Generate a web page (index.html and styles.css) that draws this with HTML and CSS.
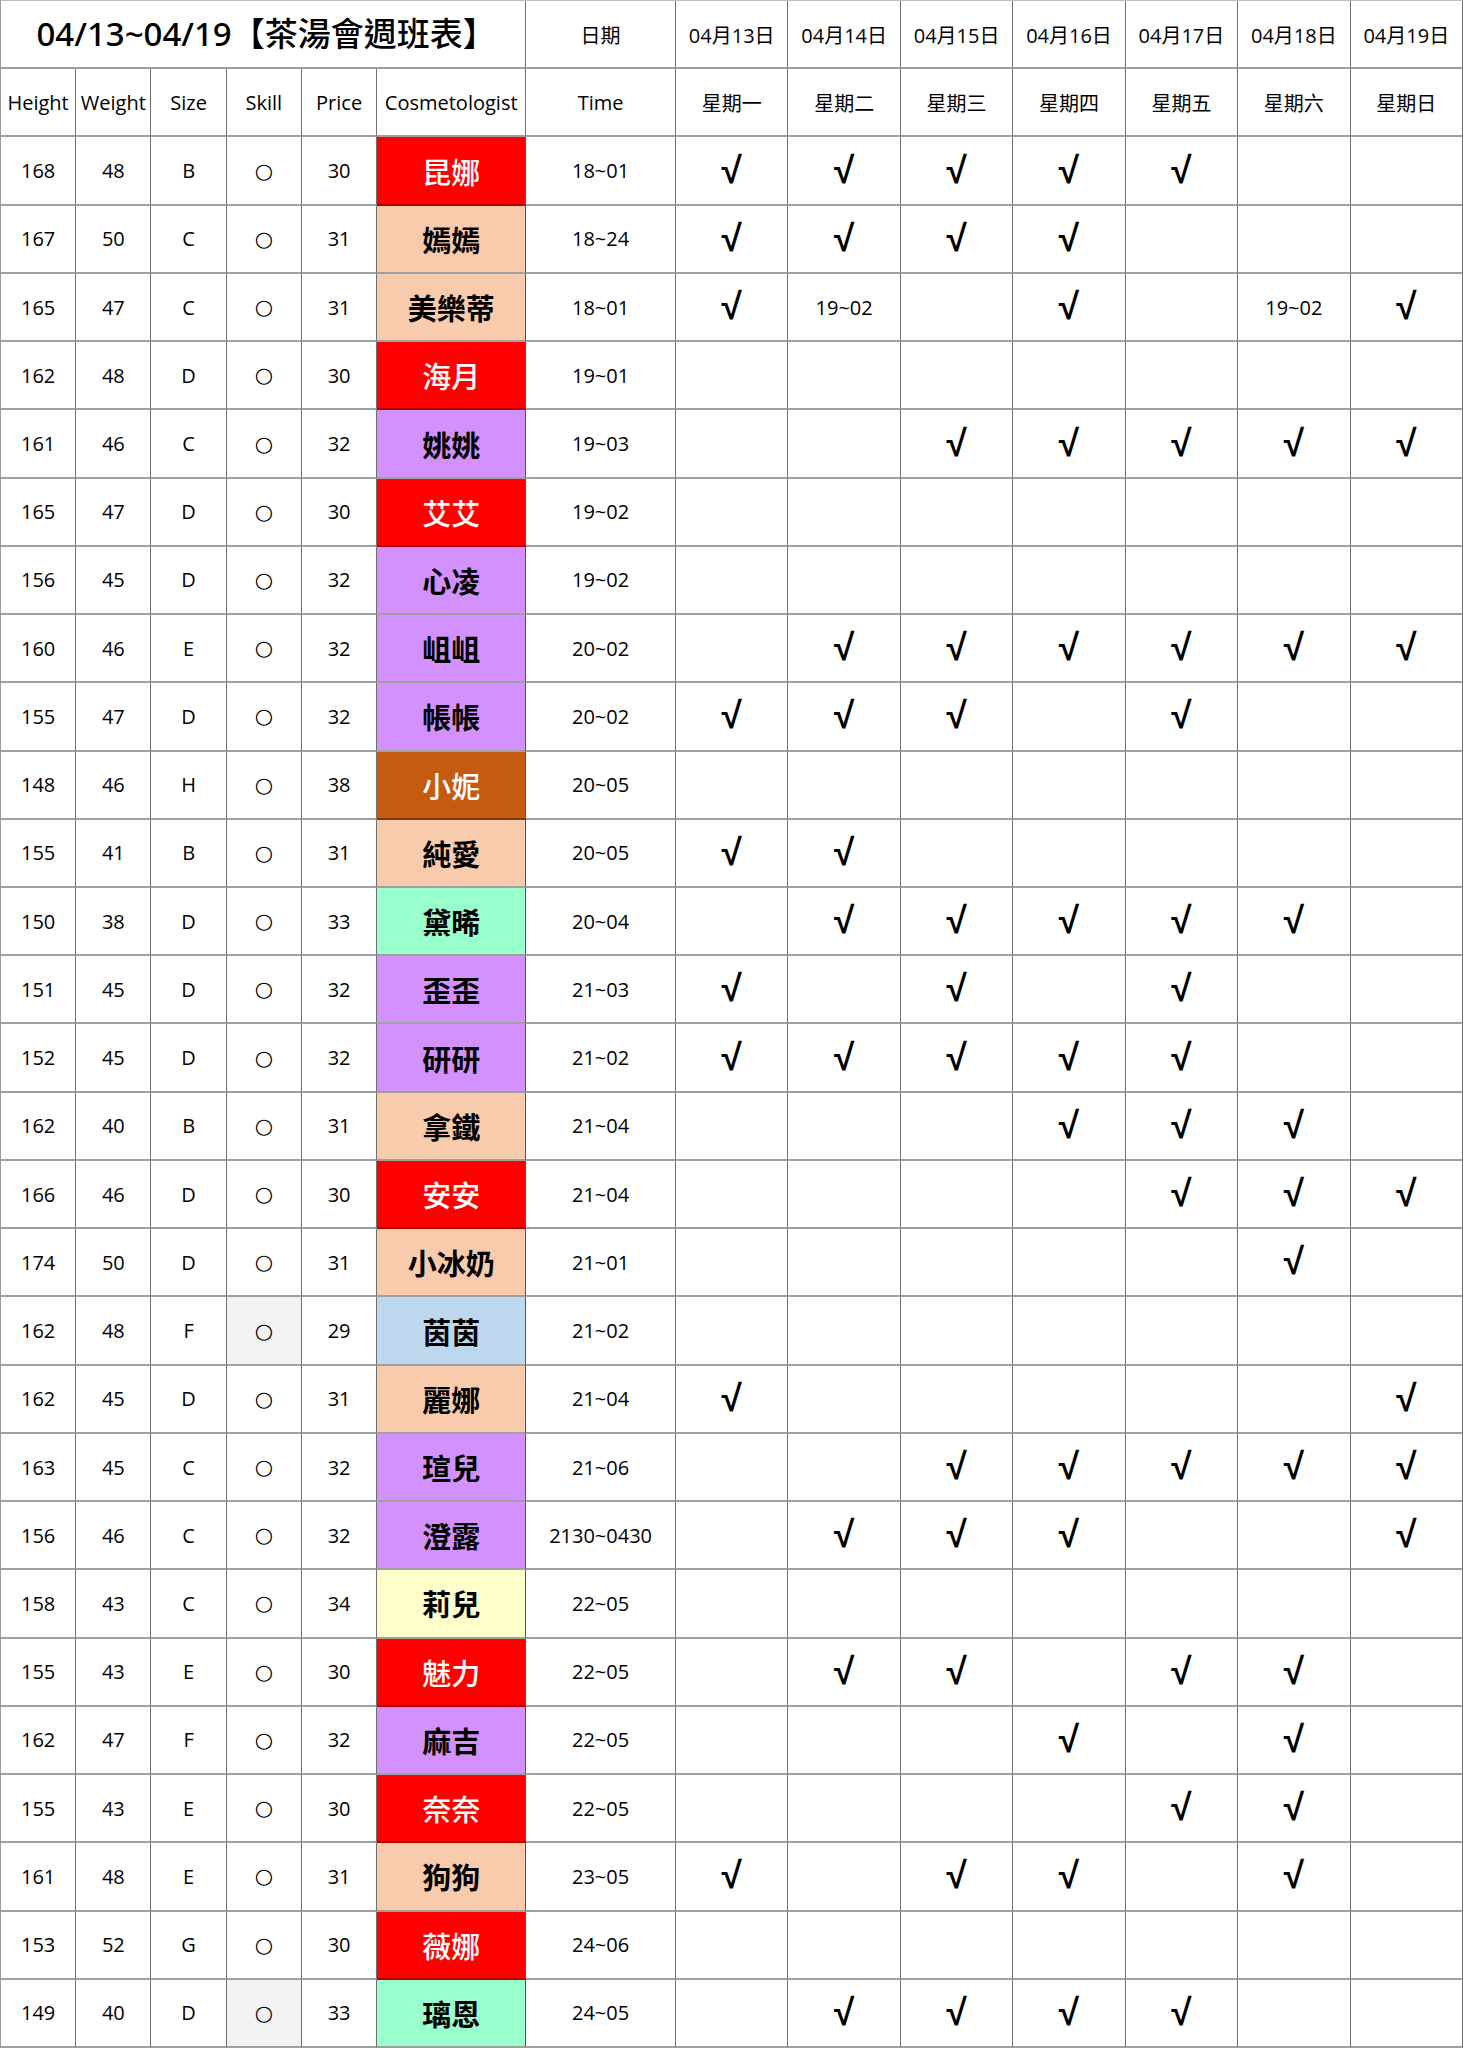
FILE: index.html
```html
<!DOCTYPE html>
<html lang="zh-Hant">
<head>
<meta charset="utf-8">
<title>茶湯會週班表</title>
<link rel="stylesheet" href="styles.css">
</head>
<body>
<div class="sheet">
  <div class="row">
    <div class="c title">04/13~04/19【茶湯會週班表】</div>
    <div class="c hd">日期</div>
    <div class="c hd">04月13日</div><div class="c hd">04月14日</div><div class="c hd">04月15日</div><div class="c hd">04月16日</div><div class="c hd">04月17日</div><div class="c hd">04月18日</div><div class="c hd">04月19日</div>
  </div>
  <div class="row">
    <div class="c hd">Height</div><div class="c hd">Weight</div><div class="c hd">Size</div><div class="c hd">Skill</div><div class="c hd">Price</div><div class="c hd">Cosmetologist</div><div class="c hd">Time</div>
    <div class="c hd">星期一</div><div class="c hd">星期二</div><div class="c hd">星期三</div><div class="c hd">星期四</div><div class="c hd">星期五</div><div class="c hd">星期六</div><div class="c hd">星期日</div>
  </div>

  <div class="row"><div class="c">168</div><div class="c">48</div><div class="c">B</div><div class="c sk">○</div><div class="c">30</div><div class="c nm red">昆娜</div><div class="c">18~01</div><div class="c ck">√</div><div class="c ck">√</div><div class="c ck">√</div><div class="c ck">√</div><div class="c ck">√</div><div class="c"></div><div class="c"></div></div>
  <div class="row"><div class="c">167</div><div class="c">50</div><div class="c">C</div><div class="c sk">○</div><div class="c">31</div><div class="c nm peach">嫣嫣</div><div class="c">18~24</div><div class="c ck">√</div><div class="c ck">√</div><div class="c ck">√</div><div class="c ck">√</div><div class="c"></div><div class="c"></div><div class="c"></div></div>
  <div class="row"><div class="c">165</div><div class="c">47</div><div class="c">C</div><div class="c sk">○</div><div class="c">31</div><div class="c nm peach">美樂蒂</div><div class="c">18~01</div><div class="c ck">√</div><div class="c">19~02</div><div class="c"></div><div class="c ck">√</div><div class="c"></div><div class="c">19~02</div><div class="c ck">√</div></div>
  <div class="row"><div class="c">162</div><div class="c">48</div><div class="c">D</div><div class="c sk">○</div><div class="c">30</div><div class="c nm red">海月</div><div class="c">19~01</div><div class="c"></div><div class="c"></div><div class="c"></div><div class="c"></div><div class="c"></div><div class="c"></div><div class="c"></div></div>
  <div class="row"><div class="c">161</div><div class="c">46</div><div class="c">C</div><div class="c sk">○</div><div class="c">32</div><div class="c nm purple">姚姚</div><div class="c">19~03</div><div class="c"></div><div class="c"></div><div class="c ck">√</div><div class="c ck">√</div><div class="c ck">√</div><div class="c ck">√</div><div class="c ck">√</div></div>
  <div class="row"><div class="c">165</div><div class="c">47</div><div class="c">D</div><div class="c sk">○</div><div class="c">30</div><div class="c nm red">艾艾</div><div class="c">19~02</div><div class="c"></div><div class="c"></div><div class="c"></div><div class="c"></div><div class="c"></div><div class="c"></div><div class="c"></div></div>
  <div class="row"><div class="c">156</div><div class="c">45</div><div class="c">D</div><div class="c sk">○</div><div class="c">32</div><div class="c nm purple">心凌</div><div class="c">19~02</div><div class="c"></div><div class="c"></div><div class="c"></div><div class="c"></div><div class="c"></div><div class="c"></div><div class="c"></div></div>
  <div class="row"><div class="c">160</div><div class="c">46</div><div class="c">E</div><div class="c sk">○</div><div class="c">32</div><div class="c nm purple">岨岨</div><div class="c">20~02</div><div class="c"></div><div class="c ck">√</div><div class="c ck">√</div><div class="c ck">√</div><div class="c ck">√</div><div class="c ck">√</div><div class="c ck">√</div></div>
  <div class="row"><div class="c">155</div><div class="c">47</div><div class="c">D</div><div class="c sk">○</div><div class="c">32</div><div class="c nm purple">帳帳</div><div class="c">20~02</div><div class="c ck">√</div><div class="c ck">√</div><div class="c ck">√</div><div class="c"></div><div class="c ck">√</div><div class="c"></div><div class="c"></div></div>
  <div class="row"><div class="c">148</div><div class="c">46</div><div class="c">H</div><div class="c sk">○</div><div class="c">38</div><div class="c nm brown">小妮</div><div class="c">20~05</div><div class="c"></div><div class="c"></div><div class="c"></div><div class="c"></div><div class="c"></div><div class="c"></div><div class="c"></div></div>
  <div class="row"><div class="c">155</div><div class="c">41</div><div class="c">B</div><div class="c sk">○</div><div class="c">31</div><div class="c nm peach">純愛</div><div class="c">20~05</div><div class="c ck">√</div><div class="c ck">√</div><div class="c"></div><div class="c"></div><div class="c"></div><div class="c"></div><div class="c"></div></div>
  <div class="row"><div class="c">150</div><div class="c">38</div><div class="c">D</div><div class="c sk">○</div><div class="c">33</div><div class="c nm mint">黛晞</div><div class="c">20~04</div><div class="c"></div><div class="c ck">√</div><div class="c ck">√</div><div class="c ck">√</div><div class="c ck">√</div><div class="c ck">√</div><div class="c"></div></div>
  <div class="row"><div class="c">151</div><div class="c">45</div><div class="c">D</div><div class="c sk">○</div><div class="c">32</div><div class="c nm purple">歪歪</div><div class="c">21~03</div><div class="c ck">√</div><div class="c"></div><div class="c ck">√</div><div class="c"></div><div class="c ck">√</div><div class="c"></div><div class="c"></div></div>
  <div class="row"><div class="c">152</div><div class="c">45</div><div class="c">D</div><div class="c sk">○</div><div class="c">32</div><div class="c nm purple">研研</div><div class="c">21~02</div><div class="c ck">√</div><div class="c ck">√</div><div class="c ck">√</div><div class="c ck">√</div><div class="c ck">√</div><div class="c"></div><div class="c"></div></div>
  <div class="row"><div class="c">162</div><div class="c">40</div><div class="c">B</div><div class="c sk">○</div><div class="c">31</div><div class="c nm peach">拿鐵</div><div class="c">21~04</div><div class="c"></div><div class="c"></div><div class="c"></div><div class="c ck">√</div><div class="c ck">√</div><div class="c ck">√</div><div class="c"></div></div>
  <div class="row"><div class="c">166</div><div class="c">46</div><div class="c">D</div><div class="c sk">○</div><div class="c">30</div><div class="c nm red">安安</div><div class="c">21~04</div><div class="c"></div><div class="c"></div><div class="c"></div><div class="c"></div><div class="c ck">√</div><div class="c ck">√</div><div class="c ck">√</div></div>
  <div class="row"><div class="c">174</div><div class="c">50</div><div class="c">D</div><div class="c sk">○</div><div class="c">31</div><div class="c nm peach">小冰奶</div><div class="c">21~01</div><div class="c"></div><div class="c"></div><div class="c"></div><div class="c"></div><div class="c"></div><div class="c ck">√</div><div class="c"></div></div>
  <div class="row"><div class="c">162</div><div class="c">48</div><div class="c">F</div><div class="c sk gray">○</div><div class="c">29</div><div class="c nm blue">茵茵</div><div class="c">21~02</div><div class="c"></div><div class="c"></div><div class="c"></div><div class="c"></div><div class="c"></div><div class="c"></div><div class="c"></div></div>
  <div class="row"><div class="c">162</div><div class="c">45</div><div class="c">D</div><div class="c sk">○</div><div class="c">31</div><div class="c nm peach">麗娜</div><div class="c">21~04</div><div class="c ck">√</div><div class="c"></div><div class="c"></div><div class="c"></div><div class="c"></div><div class="c"></div><div class="c ck">√</div></div>
  <div class="row"><div class="c">163</div><div class="c">45</div><div class="c">C</div><div class="c sk">○</div><div class="c">32</div><div class="c nm purple">瑄兒</div><div class="c">21~06</div><div class="c"></div><div class="c"></div><div class="c ck">√</div><div class="c ck">√</div><div class="c ck">√</div><div class="c ck">√</div><div class="c ck">√</div></div>
  <div class="row"><div class="c">156</div><div class="c">46</div><div class="c">C</div><div class="c sk">○</div><div class="c">32</div><div class="c nm purple">澄露</div><div class="c">2130~0430</div><div class="c"></div><div class="c ck">√</div><div class="c ck">√</div><div class="c ck">√</div><div class="c"></div><div class="c"></div><div class="c ck">√</div></div>
  <div class="row"><div class="c">158</div><div class="c">43</div><div class="c">C</div><div class="c sk">○</div><div class="c">34</div><div class="c nm yellow">莉兒</div><div class="c">22~05</div><div class="c"></div><div class="c"></div><div class="c"></div><div class="c"></div><div class="c"></div><div class="c"></div><div class="c"></div></div>
  <div class="row"><div class="c">155</div><div class="c">43</div><div class="c">E</div><div class="c sk">○</div><div class="c">30</div><div class="c nm red">魅力</div><div class="c">22~05</div><div class="c"></div><div class="c ck">√</div><div class="c ck">√</div><div class="c"></div><div class="c ck">√</div><div class="c ck">√</div><div class="c"></div></div>
  <div class="row"><div class="c">162</div><div class="c">47</div><div class="c">F</div><div class="c sk">○</div><div class="c">32</div><div class="c nm purple">麻吉</div><div class="c">22~05</div><div class="c"></div><div class="c"></div><div class="c"></div><div class="c ck">√</div><div class="c"></div><div class="c ck">√</div><div class="c"></div></div>
  <div class="row"><div class="c">155</div><div class="c">43</div><div class="c">E</div><div class="c sk">○</div><div class="c">30</div><div class="c nm red">奈奈</div><div class="c">22~05</div><div class="c"></div><div class="c"></div><div class="c"></div><div class="c"></div><div class="c ck">√</div><div class="c ck">√</div><div class="c"></div></div>
  <div class="row"><div class="c">161</div><div class="c">48</div><div class="c">E</div><div class="c sk">○</div><div class="c">31</div><div class="c nm peach">狗狗</div><div class="c">23~05</div><div class="c ck">√</div><div class="c"></div><div class="c ck">√</div><div class="c ck">√</div><div class="c"></div><div class="c ck">√</div><div class="c"></div></div>
  <div class="row"><div class="c">153</div><div class="c">52</div><div class="c">G</div><div class="c sk">○</div><div class="c">30</div><div class="c nm red">薇娜</div><div class="c">24~06</div><div class="c"></div><div class="c"></div><div class="c"></div><div class="c"></div><div class="c"></div><div class="c"></div><div class="c"></div></div>
  <div class="row"><div class="c">149</div><div class="c">40</div><div class="c">D</div><div class="c sk gray">○</div><div class="c">33</div><div class="c nm mint">璃恩</div><div class="c">24~05</div><div class="c"></div><div class="c ck">√</div><div class="c ck">√</div><div class="c ck">√</div><div class="c ck">√</div><div class="c"></div><div class="c"></div></div>
</div>
</body>
</html>
```

FILE: styles.css
```css
* {
  box-sizing: border-box;
}

html, body {
  margin: 0;
  padding: 0;
  background: #ffffff;
}

body {
  font-family: "Open Sans", "Noto Sans CJK TC", sans-serif;
  color: #000000;
}

.sheet {
  display: grid;
  width: 1463px;
  height: 2048px;
  grid-template-columns: repeat(5, 75.3fr) 149fr 150fr repeat(7, 112.5fr);
  grid-template-rows: repeat(30, 1fr);
  border-top: 1px solid #bdbdbd;
  border-left: 1px solid #9a9a9a;
}

.row {
  display: contents;
}

.c {
  display: flex;
  align-items: center;
  justify-content: center;
  border-right: 1px solid #707070;
  border-bottom: 2px solid #a0a0a0;
  font-size: 20px;
  white-space: nowrap;
  overflow: hidden;
  min-width: 0;
  min-height: 0;
}

.title {
  grid-column: 1 / 7;
  font-size: 33px;
  font-weight: 500;
  font-family: "Noto Sans", "Noto Sans CJK TC", sans-serif;
  padding-left: 6px;
  padding-bottom: 4px;
}

.hd {
  font-size: 20px;
}

.sk {
  font-family: "DejaVu Sans", sans-serif;
  font-size: 21px;
}

.ck {
  font-family: "Liberation Sans", sans-serif;
  font-weight: 700;
  font-size: 37px;
}

.nm {
  font-family: "Noto Sans CJK TC", sans-serif;
  font-size: 29px;
  font-weight: 700;
  border-right-color: #555555;
}

.gray { background: #f2f2f2; }
.red { background: #ff0000; color: #ffffff; font-weight: 500; border-bottom-color: #b00000; }
.brown { background: #c55a11; color: #ffffff; font-weight: 500; border-bottom-color: #7a3a0a; }
.peach { background: #f8cbad; }
.purple { background: #d291fd; }
.mint { background: #99ffcc; }
.blue { background: #bdd7ee; }
.yellow { background: #ffffcc; }
```
